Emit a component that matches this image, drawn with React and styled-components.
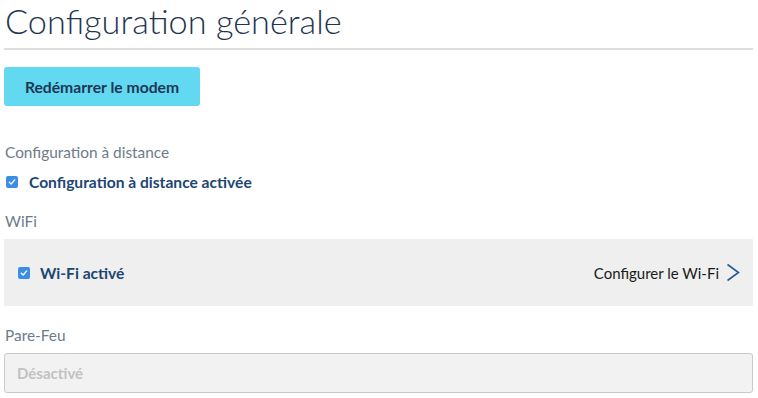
import React from "react";
import styled, { createGlobalStyle } from "styled-components";

const Global = createGlobalStyle`
  html, body { margin: 0; padding: 0; background: #fff; }
  body { font-family: Lato, "Open Sans", sans-serif; }
  * { box-sizing: border-box; }
`;

const Page = styled.div`
  padding: 0 5px 0 4px;
  width: 758px;
`;

const Title = styled.h1`
  margin: 0;
  padding: 0 0 0 1px;
  font-weight: 300;
  font-size: 34.3px;
  line-height: 42px;
  color: #1f3550;
  height: 50px;
  border-bottom: 2px solid #dedede;
`;

const PrimaryButton = styled.button`
  margin-top: 17px;
  width: 196px;
  height: 39px;
  border: none;
  border-radius: 3px;
  background: #62d8f1;
  color: #1d3756;
  font-family: Lato, sans-serif;
  font-weight: 700;
  font-size: 15.7px;
  cursor: pointer;
  display: block;
`;

const Label = styled.div`
  margin-top: ${p => p.$mt || 0}px;
  font-size: 15.4px;
  line-height: 20px;
  color: #6e7b8b;
  padding-left: 1px;
`;

const CheckRow = styled.label`
  margin-top: ${p => p.$mt || 0}px;
  display: flex;
  align-items: center;
  gap: ${p => p.$gap || 11}px;
  font-size: 15.6px;
  font-weight: 700;
  color: #1c4674;
  line-height: 20px;
  padding-left: ${p => p.$pl || 0}px;
`;

const Box = styled.span`
  width: 12px;
  height: 12px;
  border-radius: 2px;
  background: #3b8ee6;
  display: inline-flex;
  align-items: center;
  justify-content: center;
  flex-shrink: 0;
`;

const Check = () => (
  <Box>
    <svg width="8" height="8" viewBox="0 0 8 8">
      <path d="M1.3 4.2 L3.2 6 L6.7 1.9" fill="none" stroke="#fff" strokeWidth="1.4" strokeLinecap="round" strokeLinejoin="round" />
    </svg>
  </Box>
);

const Panel = styled.div`
  margin-top: 8px;
  height: 67px;
  background: #efefef;
  display: flex;
  align-items: center;
  justify-content: space-between;
  padding: 0 13px 0 14px;
`;

const LinkRow = styled.a`
  display: flex;
  align-items: center;
  gap: 7px;
  font-size: 15px;
  color: #1a1a1a;
  text-decoration: none;
`;

const Input = styled.div`
  margin-top: 8px;
  height: 40px;
  border: 1px solid #c9c9c9;
  border-radius: 3px;
  background: #f2f2f2;
  display: flex;
  align-items: center;
  padding-left: 12px;
  font-size: 15px;
  font-weight: 700;
  color: #c2c2c2;
`;

export default function App() {
  return (
    <Page>
      <Global />
      <Title>Configuration générale</Title>
      <PrimaryButton>Redémarrer le modem</PrimaryButton>
      <Label $mt={36}>Configuration à distance</Label>
      <CheckRow $mt={10} $pl={2}>
        <Check />
        Configuration à distance activée
      </CheckRow>
      <Label $mt={19}>WiFi</Label>
      <Panel>
        <CheckRow $gap={10}>
          <Check />
          Wi-Fi activé
        </CheckRow>
        <LinkRow href="#">
          Configurer le Wi-Fi
          <svg width="14" height="19" viewBox="0 0 14 19">
            <path d="M1.5 1.5 L12.5 9.5 L1.5 17.5" fill="none" stroke="#275a96" strokeWidth="1.6" />
          </svg>
        </LinkRow>
      </Panel>
      <Label $mt={19}>Pare-Feu</Label>
      <Input>Désactivé</Input>
    </Page>
  );
}
